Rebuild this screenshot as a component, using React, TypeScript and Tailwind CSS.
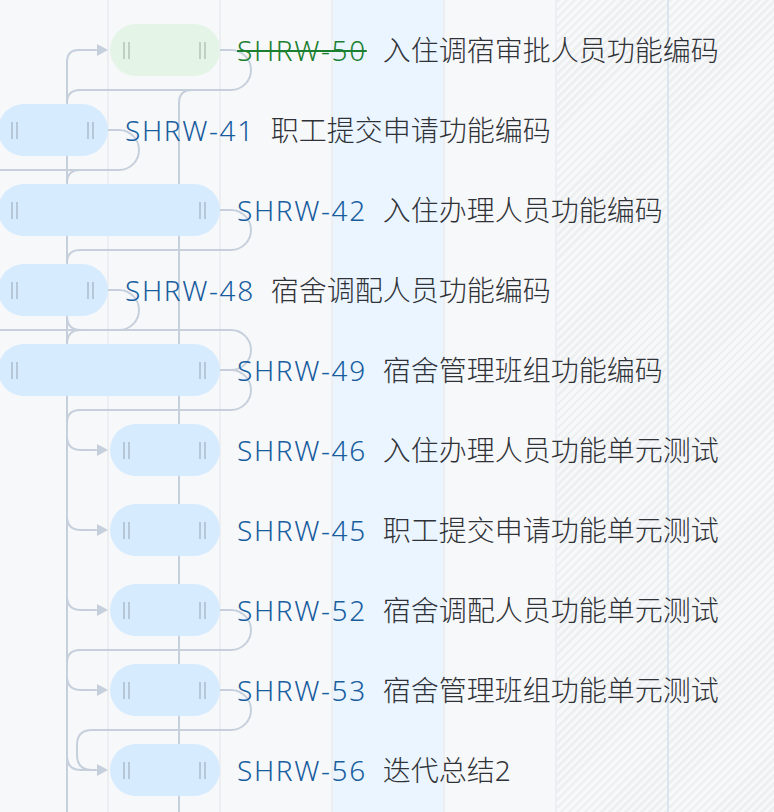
import React from "react"

type Task = {
    id: string
    title: string
    start: number // bar left in px
    width: number
    done?: boolean
}

const tasks: Task[] = [
    { id: "SHRW-50", title: "入住调宿审批人员功能编码", start: 110, width: 110, done: true },
    { id: "SHRW-41", title: "职工提交申请功能编码", start: -2, width: 110 },
    { id: "SHRW-42", title: "入住办理人员功能编码", start: -2, width: 222 },
    { id: "SHRW-48", title: "宿舍调配人员功能编码", start: -2, width: 110 },
    { id: "SHRW-49", title: "宿舍管理班组功能编码", start: -2, width: 222 },
    { id: "SHRW-46", title: "入住办理人员功能单元测试", start: 110, width: 110 },
    { id: "SHRW-45", title: "职工提交申请功能单元测试", start: 110, width: 110 },
    { id: "SHRW-52", title: "宿舍调配人员功能单元测试", start: 110, width: 110 },
    { id: "SHRW-53", title: "宿舍管理班组功能单元测试", start: 110, width: 110 },
    { id: "SHRW-56", title: "迭代总结2", start: 110, width: 110 },
]

const columns = [
    { kind: "day" },
    { kind: "day" },
    { kind: "day" },
    { kind: "today" },
    { kind: "day" },
    { kind: "weekend" },
    { kind: "weekend-edge" },
]

const LINE = "#c6d0dc"

// link paths between the bars, drawn behind them
const links = [
    "M67 812 V62 Q67 50 79 50 H98",
    "M179 812 V103 Q179 90 192 90",
    "M220 50 H231 A20 20 0 0 1 231 90 H80 Q67 90 67 103",
    "M108 130 H119 A20 20 0 0 1 119 170 H0",
    "M80 170 Q67 170 67 183",
    "M220 210 H231 A20 20 0 0 1 231 250 H80 Q67 250 67 263",
    "M108 290 H119 A20 20 0 0 1 119 330 H0",
    "M67 316 Q67 330 81 330",
    "M81 330 Q67 330 67 344",
    "M100 330 H231 A20 20 0 0 1 231 370 H220",
    "M220 370 H231 A20 20 0 0 1 231 410 H80 Q67 410 67 423",
    "M67 436 Q67 450 81 450 H98",
    "M67 516 Q67 530 81 530 H98",
    "M67 596 Q67 610 81 610 H98",
    "M220 610 H231 A20 20 0 0 1 231 650 H80 Q67 650 67 663",
    "M67 676 Q67 690 81 690 H98",
    "M220 690 H231 A20 20 0 0 1 231 730 H92 Q77 730 77 745 V755 Q77 770 92 770 H98",
    "M67 756 Q67 770 81 770 H98",
]

const arrows = [50, 450, 530, 610, 690, 770]

function Handle() {
    return (
        <span className="flex gap-[3px]">
            <span className="w-[2px] h-[17px] bg-black/15" />
            <span className="w-[2px] h-[17px] bg-black/15" />
        </span>
    )
}

export default function App() {
    return (
        <div
            className="relative w-[774px] h-[812px] overflow-hidden bg-[#f7f8fa]"
            style={{ fontFamily: '"Noto Sans", "Noto Sans CJK SC", sans-serif' }}
        >
            {/* day columns */}
            <div className="absolute inset-0 flex ml-[-3px]">
                {columns.map((col, i) => (
                    <div
                        key={i}
                        className={
                            col.kind === "today"
                                ? "w-[112px] shrink-0 h-full bg-[#eaf5ff] border-r-2 border-[#eceef1]"
                                : col.kind === "weekend"
                                  ? "w-[112px] shrink-0 h-full bg-[repeating-linear-gradient(135deg,#eeeff1_0px,#eeeff1_2.5px,#f7f8fa_2.5px,#f7f8fa_5.7px)] border-r-2 border-[#dbe5ef]"
                                  : col.kind === "weekend-edge"
                                    ? "w-[112px] shrink-0 h-full bg-[repeating-linear-gradient(135deg,#eeeff1_0px,#eeeff1_2.5px,#f7f8fa_2.5px,#f7f8fa_5.7px)]"
                                    : "w-[112px] shrink-0 h-full border-r-2 border-[#eceef1]"
                        }
                    />
                ))}
            </div>

            {/* dependency links */}
            <svg className="absolute inset-0" width={774} height={812} viewBox="0 0 774 812">
                {links.map((d, i) => (
                    <path key={i} d={d} fill="none" stroke={LINE} strokeWidth={2} />
                ))}
                {arrows.map((y) => (
                    <polygon key={y} points={`97,${y - 6} 108,${y} 97,${y + 6}`} fill={LINE} />
                ))}
            </svg>

            {/* task rows */}
            <div className="relative flex flex-col pt-[10px]">
                {tasks.map((t) => (
                    <div key={t.id} className="flex items-center h-[80px] shrink-0">
                        <div
                            className={
                                (t.done ? "bg-[#e4f5e7] " : "bg-[#d6ebfd] ") +
                                "h-[52px] shrink-0 rounded-full flex items-center justify-between pl-[13px] pr-[14px]"
                            }
                            style={{ marginLeft: t.start, width: t.width }}
                        >
                            <Handle />
                            <Handle />
                        </div>
                        <div className="ml-[17px] flex items-center gap-[16px] whitespace-nowrap text-[28px] leading-none font-light">
                            <span
                                className={
                                    t.done
                                        ? "tracking-[1.6px] text-[#1a7f2e] line-through decoration-[#1a7f2e] decoration-2"
                                        : "tracking-[1.6px] text-[#185d9e]"
                                }
                            >
                                {t.id}
                            </span>
                            <span className="text-[#2f3237]">{t.title}</span>
                        </div>
                    </div>
                ))}
            </div>
        </div>
    )
}
